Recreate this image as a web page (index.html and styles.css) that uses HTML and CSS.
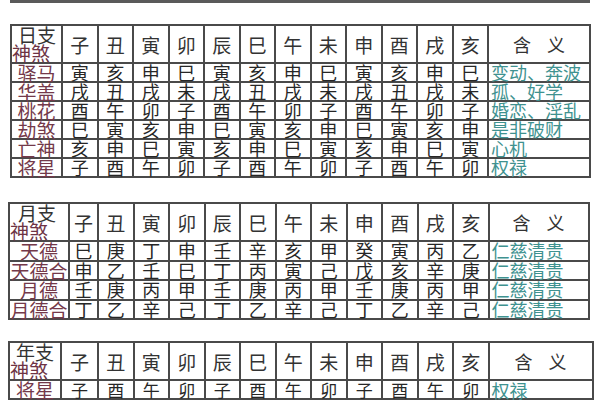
FILE: index.html
```html
<!DOCTYPE html>
<html lang="zh">
<head>
<meta charset="utf-8">
<link rel="stylesheet" href="styles.css">
</head>
<body>
<div class="band"></div>

<table class="tbl t1">
  <colgroup><col class="c-lbl"><col span="12" class="c-br"><col class="c-mean"></colgroup>
  <tr class="hrow">
    <td class="corner"><div class="cr-top">日支</div><div class="cr-bot">神煞</div></td>
    <td>子</td><td>丑</td><td>寅</td><td>卯</td><td>辰</td><td>巳</td><td>午</td><td>未</td><td>申</td><td>酉</td><td>戌</td><td>亥</td>
    <td class="hmean">含&nbsp;&nbsp;&nbsp;&nbsp;义</td>
  </tr>
  <tr><td class="lbl">驿马</td><td>寅</td><td>亥</td><td>申</td><td>巳</td><td>寅</td><td>亥</td><td>申</td><td>巳</td><td>寅</td><td>亥</td><td>申</td><td>巳</td><td class="mean">变动、奔波</td></tr>
  <tr><td class="lbl">华盖</td><td>戌</td><td>丑</td><td>戌</td><td>未</td><td>戌</td><td>丑</td><td>戌</td><td>未</td><td>戌</td><td>丑</td><td>戌</td><td>未</td><td class="mean">孤、好学</td></tr>
  <tr><td class="lbl">桃花</td><td>酉</td><td>午</td><td>卯</td><td>子</td><td>酉</td><td>午</td><td>卯</td><td>子</td><td>酉</td><td>午</td><td>卯</td><td>子</td><td class="mean">婚恋、淫乱</td></tr>
  <tr><td class="lbl">劫煞</td><td>巳</td><td>寅</td><td>亥</td><td>申</td><td>巳</td><td>寅</td><td>亥</td><td>申</td><td>巳</td><td>寅</td><td>亥</td><td>申</td><td class="mean">是非破财</td></tr>
  <tr><td class="lbl">亡神</td><td>亥</td><td>申</td><td>巳</td><td>寅</td><td>亥</td><td>申</td><td>巳</td><td>寅</td><td>亥</td><td>申</td><td>巳</td><td>寅</td><td class="mean">心机</td></tr>
  <tr><td class="lbl">将星</td><td>子</td><td>酉</td><td>午</td><td>卯</td><td>子</td><td>酉</td><td>午</td><td>卯</td><td>子</td><td>酉</td><td>午</td><td>卯</td><td class="mean">权禄</td></tr>
</table>

<table class="tbl t2">
  <colgroup><col class="c-lbl"><col class="c-zi"><col span="11" class="c-br"><col class="c-mean"></colgroup>
  <tr class="hrow">
    <td class="corner"><div class="cr-top">月支</div><div class="cr-bot">神煞</div></td>
    <td>子</td><td>丑</td><td>寅</td><td>卯</td><td>辰</td><td>巳</td><td>午</td><td>未</td><td>申</td><td>酉</td><td>戌</td><td>亥</td>
    <td class="hmean">含&nbsp;&nbsp;&nbsp;&nbsp;义</td>
  </tr>
  <tr><td class="lbl">天德</td><td>巳</td><td>庚</td><td>丁</td><td>申</td><td>壬</td><td>辛</td><td>亥</td><td>甲</td><td>癸</td><td>寅</td><td>丙</td><td>乙</td><td class="mean">仁慈清贵</td></tr>
  <tr><td class="lbl">天德合</td><td>申</td><td>乙</td><td>壬</td><td>巳</td><td>丁</td><td>丙</td><td>寅</td><td>己</td><td>戊</td><td>亥</td><td>辛</td><td>庚</td><td class="mean">仁慈清贵</td></tr>
  <tr><td class="lbl">月德</td><td>壬</td><td>庚</td><td>丙</td><td>甲</td><td>壬</td><td>庚</td><td>丙</td><td>甲</td><td>壬</td><td>庚</td><td>丙</td><td>甲</td><td class="mean">仁慈清贵</td></tr>
  <tr><td class="lbl">月德合</td><td>丁</td><td>乙</td><td>辛</td><td>己</td><td>丁</td><td>乙</td><td>辛</td><td>己</td><td>丁</td><td>乙</td><td>辛</td><td>己</td><td class="mean">仁慈清贵</td></tr>
</table>

<table class="tbl t3">
  <colgroup><col class="c-lbl"><col class="c-zi"><col span="11" class="c-br"><col class="c-mean"></colgroup>
  <tr class="hrow">
    <td class="corner"><div class="cr-top">年支</div><div class="cr-bot">神煞</div></td>
    <td>子</td><td>丑</td><td>寅</td><td>卯</td><td>辰</td><td>巳</td><td>午</td><td>未</td><td>申</td><td>酉</td><td>戌</td><td>亥</td>
    <td class="hmean">含&nbsp;&nbsp;&nbsp;&nbsp;义</td>
  </tr>
  <tr class="lastrow"><td class="lbl">将星</td><td>子</td><td>酉</td><td>午</td><td>卯</td><td>子</td><td>酉</td><td>午</td><td>卯</td><td>子</td><td>酉</td><td>午</td><td>卯</td><td class="mean">权禄</td></tr>
</table>
</body>
</html>
```
FILE: styles.css
```css
html, body {
  margin: 0;
  padding: 0;
  background: #ffffff;
}
body {
  width: 600px;
  height: 400px;
  overflow: hidden;
  font-family: "Noto Sans CJK SC", "Noto Sans", sans-serif;
  color: #262626;
}
.band {
  margin-left: 10px;
  width: 580px;
  height: 3px;
  background: #5a5a5a;
}
.tbl {
  border-collapse: collapse;
  table-layout: fixed;
}
.tbl td {
  border: 2px solid #4a4a4a;
  padding: 0;
  text-align: center;
  font-size: 18px;
  line-height: 17px;
  height: 17px;
  white-space: nowrap;
}
.tbl .hrow td {
  height: 36px;
  font-size: 19px;
  color: #333;
}
.t1 { margin: 21px 0 0 10px; width: 579px; }
.t2 { margin: 24px 0 0 8px; width: 579px; }
.t3 { margin: 21px 0 0 8px; width: 583px; }
.t3 .hrow td { height: 35px; }
.t3 .lastrow td { font-size: 17px; line-height: 16px; }

.c-br { width: 35.5px; }
.t1 .c-lbl { width: 51px; }
.t1 .c-mean { width: 102px; }
.t2 .c-lbl { width: 60px; }
.t2 .c-zi { width: 29px; }
.t2 .c-mean { width: 100px; }
.t3 .c-lbl { width: 52px; }
.t3 .c-zi { width: 37px; }
.t3 .c-mean { width: 104px; }

.t2 td { height: 17.5px; }

.corner .cr-top {
  text-align: right;
  padding-right: 5px;
  line-height: 18px;
  color: #333;
}
.t2 .corner .cr-top { padding-right: 12px; }
.t3 .corner .cr-top { padding-right: 6px; }
.corner .cr-bot {
  text-align: left;
  line-height: 18px;
  color: #6e3344;
}
.tbl td.lbl {
  color: #74394a;
  font-size: 19px;
}
.tbl td.mean {
  text-align: left;
  color: #3f9290;
  padding-left: 2px;
  font-size: 18px;
}
.tbl .hrow td.hmean {
  font-size: 18px;
  color: #333;
}
```
